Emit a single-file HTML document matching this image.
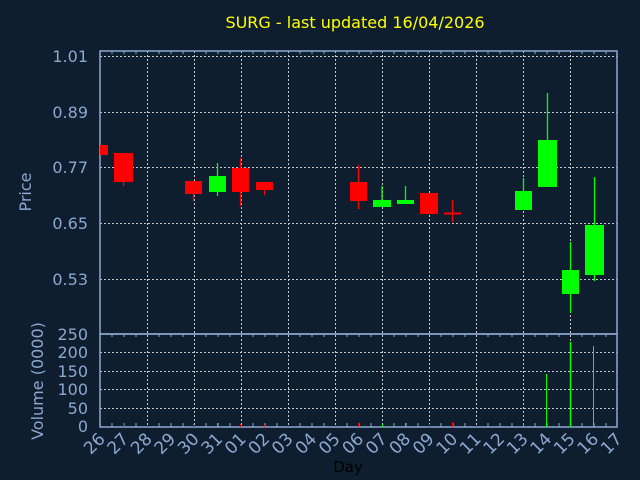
<!DOCTYPE html>
<html><head><meta charset="utf-8"><style>
html,body{margin:0;padding:0;background:#0f1e2f;}
svg{display:block;font-family:"DejaVu Sans","Liberation Sans",sans-serif;}
</style></head><body>
<svg width="640" height="480" viewBox="0 0 640 480" xmlns="http://www.w3.org/2000/svg">
<rect width="640" height="480" fill="#0f1e2f"/>
<text x="355" y="28" fill="#ffff00" font-size="16" text-anchor="middle">SURG - last updated 16/04/2026</text>
<g stroke="#c8c8c8" stroke-width="1" stroke-dasharray="2,2" fill="none">
<path d="M100 56.5H617M100 112.5H617M100 167.5H617M100 223.5H617M100 279.5H617"/>
<path d="M100 352.5H617M100 371.5H617M100 389.5H617M100 408.5H617"/>
<path d="M147.5 51V427M194.5 51V427M241.5 51V427M288.5 51V427M335.5 51V427M382.5 51V427M429.5 51V427M476.5 51V427M523.5 51V427M570.5 51V427"/>
</g>
<g stroke="#8aa8d0" stroke-width="1.5" fill="none">
<rect x="100" y="51" width="517" height="283"/>
<rect x="100" y="334" width="517" height="93"/>
</g>
<g stroke="#8aa8d0" stroke-width="1">
<path d="M112 51v3M124 51v3M136 51v3M159 51v3M171 51v3M183 51v3M206 51v3M218 51v3M230 51v3M253 51v3M265 51v3M277 51v3M300 51v3M312 51v3M324 51v3M347 51v3M359 51v3M371 51v3M394 51v3M406 51v3M418 51v3M441 51v3M453 51v3M465 51v3M488 51v3M500 51v3M512 51v3M535 51v3M547 51v3M559 51v3M582 51v3M594 51v3M606 51v3"/>
<path d="M112 427v-4M124 427v-4M136 427v-4M159 427v-4M171 427v-4M183 427v-4M206 427v-4M218 427v-4M230 427v-4M253 427v-4M265 427v-4M277 427v-4M300 427v-4M312 427v-4M324 427v-4M347 427v-4M359 427v-4M371 427v-4M394 427v-4M406 427v-4M418 427v-4M441 427v-4M453 427v-4M465 427v-4M488 427v-4M500 427v-4M512 427v-4M535 427v-4M547 427v-4M559 427v-4M582 427v-4M594 427v-4M606 427v-4"/>
<path d="M112 334v3M124 334v3M136 334v3M159 334v3M171 334v3M183 334v3M206 334v3M218 334v3M230 334v3M253 334v3M265 334v3M277 334v3M300 334v3M312 334v3M324 334v3M347 334v3M359 334v3M371 334v3M394 334v3M406 334v3M418 334v3M441 334v3M453 334v3M465 334v3M488 334v3M500 334v3M512 334v3M535 334v3M547 334v3M559 334v3M582 334v3M594 334v3M606 334v3"/>
</g>
<g fill="#8aa8d0" font-size="16" text-anchor="end">
<text x="88" y="62">1.01</text><text x="88" y="118">0.89</text><text x="88" y="173">0.77</text><text x="88" y="229">0.65</text><text x="88" y="285">0.53</text>
<text x="88" y="340">250</text><text x="88" y="358">200</text><text x="88" y="377">150</text><text x="88" y="395">100</text><text x="88" y="414">50</text><text x="88" y="432">0</text>
</g>
<text transform="translate(31,192) rotate(-90)" fill="#8aa8d0" font-size="16" text-anchor="middle">Price</text>
<text transform="translate(43,381) rotate(-90)" fill="#8aa8d0" font-size="16" text-anchor="middle">Volume (0000)</text>
<g fill="#8aa8d0" font-size="17" text-anchor="end">
<text transform="translate(106,440) rotate(-45)">26</text>
<text transform="translate(129.5,440) rotate(-45)">27</text>
<text transform="translate(153,440) rotate(-45)">28</text>
<text transform="translate(176.5,440) rotate(-45)">29</text>
<text transform="translate(200,440) rotate(-45)">30</text>
<text transform="translate(223.5,440) rotate(-45)">31</text>
<text transform="translate(247,440) rotate(-45)">01</text>
<text transform="translate(270.5,440) rotate(-45)">02</text>
<text transform="translate(294,440) rotate(-45)">03</text>
<text transform="translate(317.5,440) rotate(-45)">04</text>
<text transform="translate(341,440) rotate(-45)">05</text>
<text transform="translate(364.5,440) rotate(-45)">06</text>
<text transform="translate(388,440) rotate(-45)">07</text>
<text transform="translate(411.5,440) rotate(-45)">08</text>
<text transform="translate(435,440) rotate(-45)">09</text>
<text transform="translate(458.5,440) rotate(-45)">10</text>
<text transform="translate(482,440) rotate(-45)">11</text>
<text transform="translate(505.5,440) rotate(-45)">12</text>
<text transform="translate(529,440) rotate(-45)">13</text>
<text transform="translate(552.5,440) rotate(-45)">14</text>
<text transform="translate(576,440) rotate(-45)">15</text>
<text transform="translate(599.5,440) rotate(-45)">16</text>
<text transform="translate(623,440) rotate(-45)">17</text>
</g>
<text x="348" y="472" fill="#000" font-size="15" text-anchor="middle">Day</text>
<g stroke-width="1.3">
<rect x="100" y="145" width="8" height="10" fill="#ff0000"/>
<line x1="123.5" y1="181" x2="123.5" y2="186" stroke="#ff0000"/><rect x="114" y="153" width="19" height="29" fill="#ff0000"/>
<line x1="193.5" y1="193" x2="193.5" y2="201" stroke="#ff0000"/><rect x="185" y="181" width="17" height="13" fill="#ff0000"/>
<line x1="217.5" y1="163" x2="217.5" y2="196" stroke="#00ff00"/><rect x="209" y="176" width="17" height="16" fill="#00ff00"/>
<line x1="240.5" y1="158" x2="240.5" y2="206" stroke="#ff0000"/><rect x="232" y="168" width="17" height="24" fill="#ff0000"/>
<line x1="264.5" y1="189" x2="264.5" y2="195" stroke="#ff0000"/><rect x="256" y="182" width="17" height="8" fill="#ff0000"/>
<line x1="358.5" y1="165" x2="358.5" y2="209" stroke="#ff0000"/><rect x="350" y="182" width="17" height="19" fill="#ff0000"/>
<line x1="382" y1="186" x2="382" y2="207" stroke="#00ff00"/><rect x="373" y="200" width="18" height="7" fill="#00ff00"/>
<line x1="405.5" y1="186" x2="405.5" y2="204" stroke="#00ff00"/><rect x="397" y="200" width="17" height="4" fill="#00ff00"/>
<rect x="420" y="193" width="18" height="21" fill="#ff0000"/>
<line x1="452.5" y1="200" x2="452.5" y2="222" stroke="#ff0000"/><line x1="444" y1="213.5" x2="461" y2="213.5" stroke="#ff0000" stroke-width="2"/>
<line x1="523.5" y1="178" x2="523.5" y2="210" stroke="#00ff00"/><rect x="515" y="191" width="17" height="19" fill="#00ff00"/>
<line x1="547.5" y1="93" x2="547.5" y2="187" stroke="#00ff00"/><rect x="538" y="140" width="19" height="47" fill="#00ff00"/>
<line x1="570.5" y1="242" x2="570.5" y2="313" stroke="#00ff00"/><rect x="562" y="270" width="17" height="24" fill="#00ff00"/>
<line x1="594.5" y1="177" x2="594.5" y2="281" stroke="#00ff00"/><rect x="585" y="225" width="19" height="50" fill="#00ff00"/>
</g>
<g stroke-width="1">
<line x1="123.5" y1="423" x2="123.5" y2="427" stroke="#ff0000"/>
<line x1="193.5" y1="424" x2="193.5" y2="427" stroke="#ff0000"/>
<line x1="217.5" y1="423" x2="217.5" y2="427" stroke="#00ff00"/>
<line x1="240.5" y1="424" x2="240.5" y2="427" stroke="#ff0000"/>
<line x1="264.5" y1="425" x2="264.5" y2="427" stroke="#ff0000"/>
<line x1="358.5" y1="423" x2="358.5" y2="427" stroke="#ff0000"/>
<line x1="382.5" y1="424" x2="382.5" y2="427" stroke="#00ff00"/>
<line x1="405.5" y1="423" x2="405.5" y2="427" stroke="#00ff00"/>
<line x1="429.5" y1="424" x2="429.5" y2="427" stroke="#ff0000"/>
<line x1="452.5" y1="422" x2="452.5" y2="427" stroke="#ff0000"/>
<line x1="523.5" y1="423" x2="523.5" y2="427" stroke="#00ff00"/>
<line x1="546.5" y1="374" x2="546.5" y2="427" stroke="#00ff00"/>
<line x1="570.5" y1="342" x2="570.5" y2="427" stroke="#00ff00" stroke-width="1.5"/>
<line x1="593.5" y1="346" x2="593.5" y2="427" stroke="#00ff00"/>
</g>
</svg>
</body></html>
